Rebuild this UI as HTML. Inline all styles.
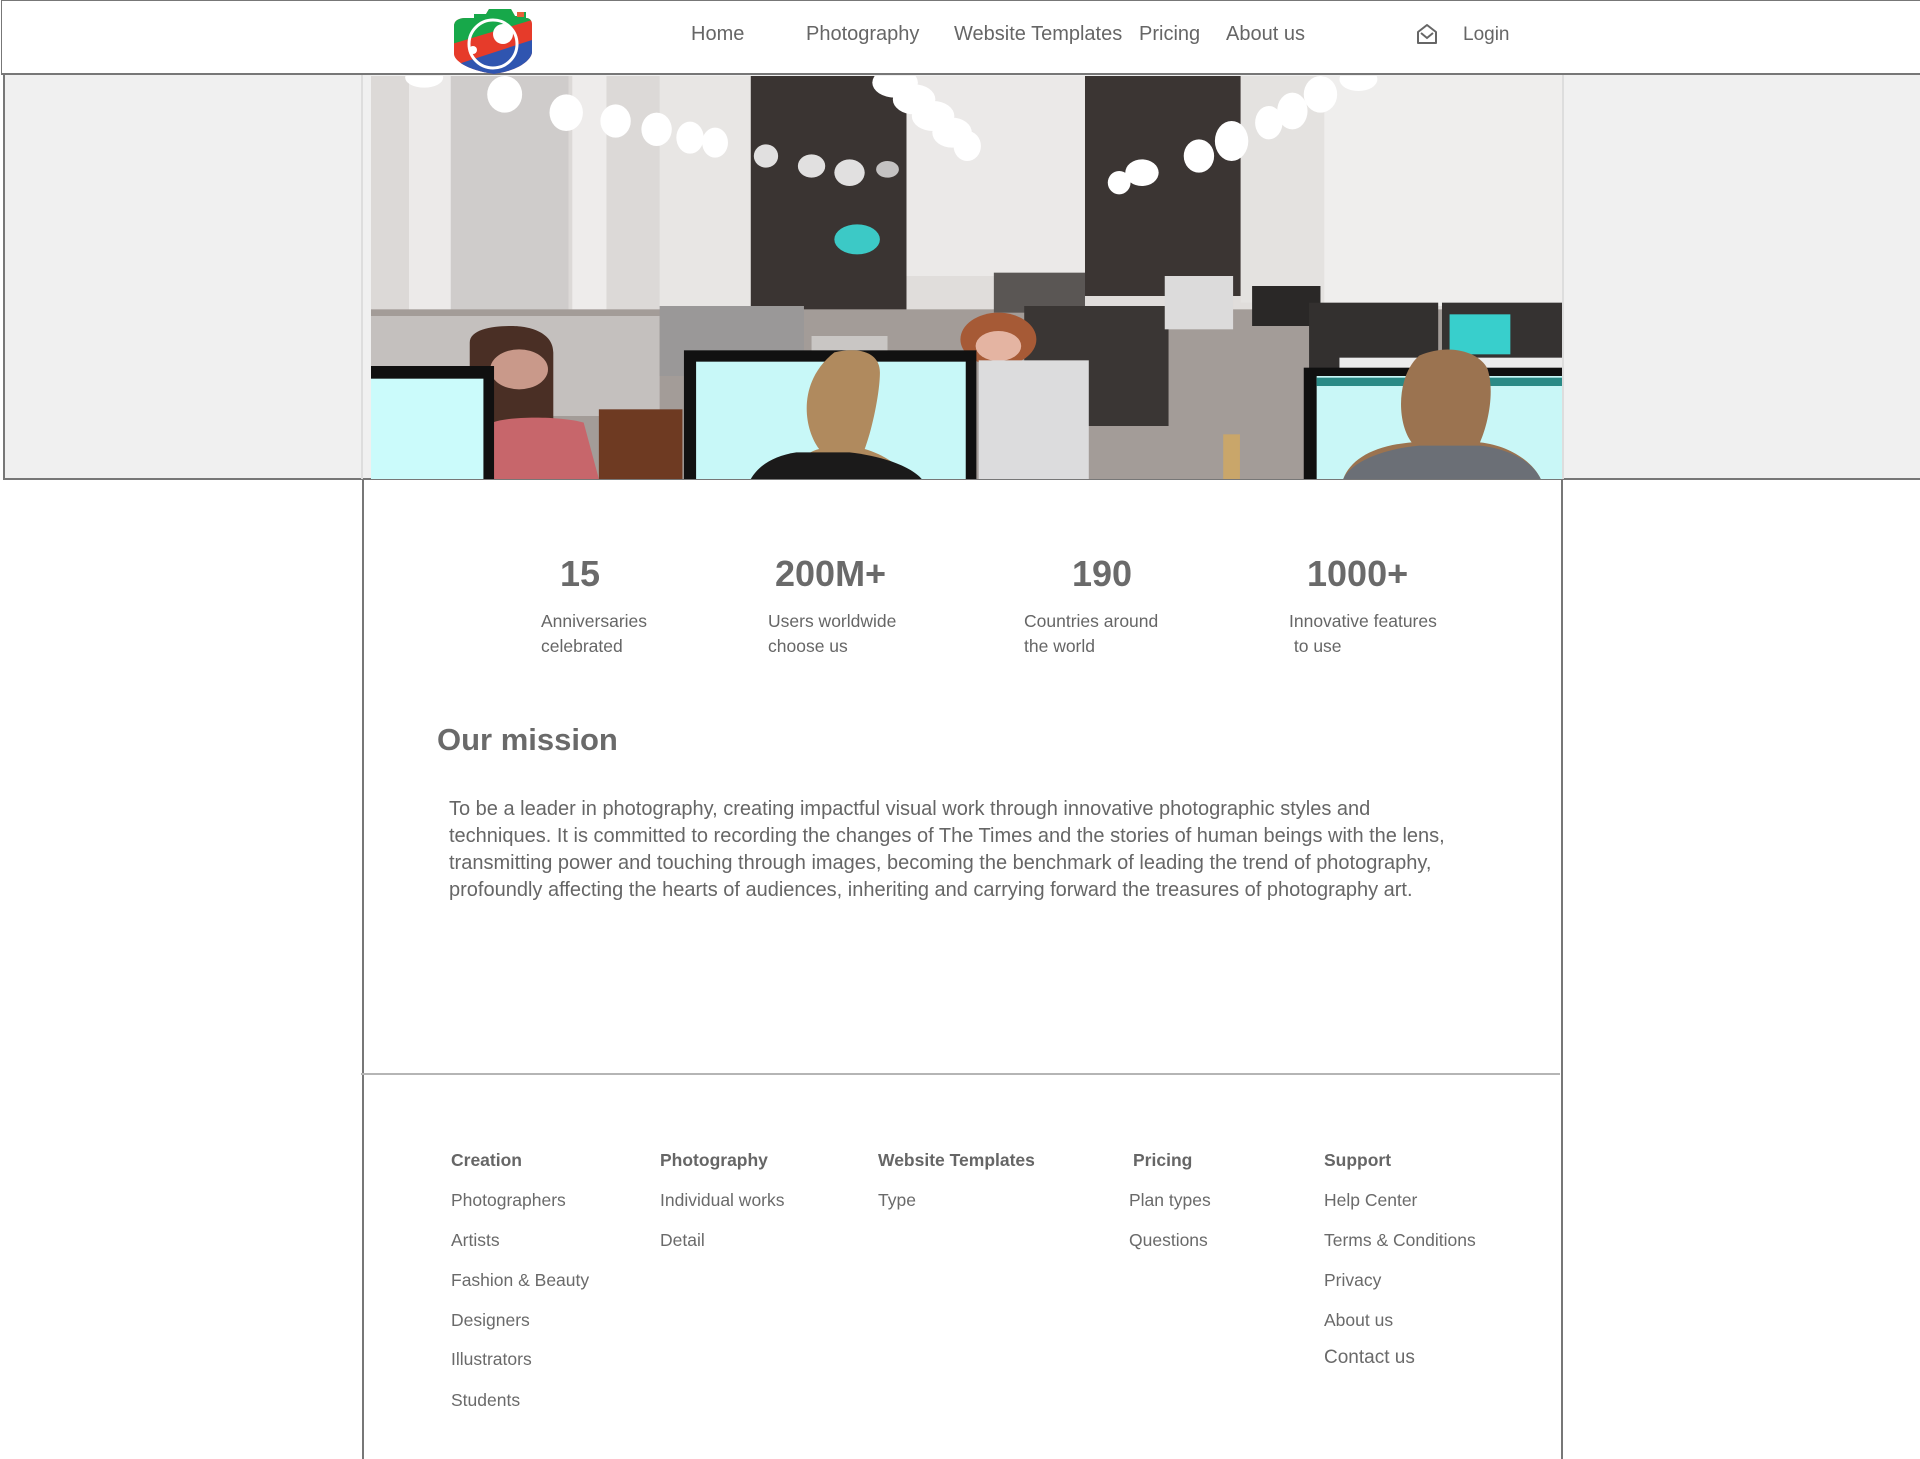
<!DOCTYPE html>
<html><head><meta charset="utf-8">
<style>
*{margin:0;padding:0;box-sizing:border-box}
html,body{width:1920px;height:1459px;overflow:hidden;background:#fff;font-family:"Liberation Sans",sans-serif;color:#666}
.a{position:absolute;white-space:nowrap}
.nav{font-size:20px;line-height:24px;top:22px;color:#666}
.num{font-size:36px;font-weight:bold;line-height:40px;top:554px;color:#6a6a6a}
.lab{font-size:17.5px;line-height:25px;top:609px;color:#666}
.fh{font-size:17.5px;font-weight:bold;line-height:22px;color:#666}
.fl{font-size:17.5px;line-height:22px;color:#6a6a6a}
</style></head><body>
<!-- header -->
<div class="a" style="left:1px;top:0;width:1919px;height:75px;border:1px solid #777;border-right:none;border-bottom:2px solid #777"></div>
<svg class="a" style="left:452px;top:6px" width="80" height="68" viewBox="0 0 80 68">
<defs><clipPath id="cb"><path d="M14 12h8v-4h12l3-5h22l4 7h5v-4h6v6c4 0 6 3 6 6v28c0 6-10 18-38 22C14 64 2 54 2 48V20c0-5 4-8 12-8z"/></clipPath></defs>
<g clip-path="url(#cb)">
<rect x="0" y="0" width="80" height="68" fill="#e63b2a"/>
<polygon points="0,0 80,0 80,14 0,38" fill="#17a84a"/>
<polygon points="0,60 80,34 80,68 0,68" fill="#2f55b0"/>
</g>
<rect x="65" y="6" width="7" height="5" fill="#e8603a"/>
<circle cx="41" cy="38" r="24" fill="none" stroke="#fff" stroke-width="3"/>
<circle cx="51" cy="28" r="10" fill="#fff"/>
<circle cx="21" cy="44" r="4" fill="#fff"/>
</svg>
<div class="a nav" style="left:691px">Home</div>
<div class="a nav" style="left:806px">Photography</div>
<div class="a nav" style="left:954px">Website Templates</div>
<div class="a nav" style="left:1139px">Pricing</div>
<div class="a nav" style="left:1226px">About us</div>
<svg class="a" style="left:1416px;top:23px" width="22" height="22" viewBox="0 0 22 22"><path d="M2 9 11 2l9 7v11H2z" fill="none" stroke="#666" stroke-width="2" stroke-linejoin="round"/><path d="M5 10l6 5 6-5" fill="none" stroke="#666" stroke-width="2"/></svg>
<div class="a nav" style="left:1463px;top:23px;font-size:19px">Login</div>

<!-- grey band -->
<div class="a" style="left:3px;top:75px;width:1917px;height:405px;background:#f0f0f0;border-left:2px solid #777;border-bottom:2px solid #777"></div>
<div class="a" style="left:362px;top:480px;width:2px;height:979px;background:#777"></div>
<div class="a" style="left:1561px;top:480px;width:2px;height:979px;background:#777"></div>
<div class="a" style="left:361px;top:75px;width:1203px;height:404px;border-left:2px solid #ddd;border-right:2px solid #ddd"></div>

<!-- hero -->
<svg class="a" style="left:371px;top:76px" width="1191" height="403" viewBox="0 0 1568 1209" preserveAspectRatio="none">
<rect width="1568" height="1209" fill="#e0dddb"/>
<rect x="0" y="0" width="500" height="800" fill="#dcd9d7"/>
<rect x="100" y="0" width="160" height="720" fill="#cfcccb"/>
<rect x="50" y="0" width="55" height="900" fill="#eceae9"/>
<rect x="265" y="0" width="45" height="1000" fill="#eeeceb"/>
<rect x="380" y="0" width="120" height="700" fill="#e8e6e4"/>
<rect x="500" y="0" width="205" height="710" fill="#3a3432"/>
<rect x="705" y="0" width="235" height="600" fill="#ebe9e8"/>
<rect x="940" y="0" width="205" height="660" fill="#3b3533"/>
<rect x="1145" y="0" width="110" height="680" fill="#e4e2e0"/>
<rect x="1255" y="0" width="313" height="690" fill="#efeeed"/>
<ellipse cx="640" cy="490" rx="30" ry="45" fill="#3cc9c6"/>
<rect x="0" y="700" width="1568" height="509" fill="#a39c98"/>
<rect x="0" y="720" width="380" height="300" fill="#c4c0be"/>
<rect x="380" y="690" width="190" height="210" fill="#9a9898"/>
<rect x="820" y="590" width="120" height="120" fill="#5a5654"/>
<rect x="860" y="690" width="190" height="360" fill="#3a3634"/>
<rect x="1045" y="600" width="90" height="160" fill="#dcdbdb"/>
<rect x="1160" y="630" width="90" height="120" fill="#2a2827"/>
<rect x="1235" y="680" width="170" height="200" fill="#33302f"/>
<rect x="1410" y="680" width="158" height="200" fill="#353231"/>
<rect x="1420" y="715" width="80" height="120" fill="#38cfcc"/>
<rect x="580" y="780" width="100" height="60" fill="#c9c6c4"/>
<path d="M130 1209V800c0-40 30-50 55-50s55 20 55 80v300l60 79z" fill="#4a2f25"/>
<path d="M160 1040c20-20 90-20 120 0l20 169H160z" fill="#c7666b"/>
<ellipse cx="195" cy="880" rx="38" ry="60" fill="#c9998a"/>
<rect x="300" y="1000" width="110" height="209" fill="#6e3a22"/>
<ellipse cx="826" cy="790" rx="50" ry="80" fill="#a65a36"/>
<ellipse cx="826" cy="810" rx="30" ry="45" fill="#e4b4a2"/>
<rect x="0" y="870" width="162" height="339" fill="#101010"/>
<rect x="0" y="908" width="148" height="301" fill="#cbfbfb"/>
<rect x="412" y="823" width="385" height="386" fill="#111"/>
<rect x="428" y="857" width="355" height="352" fill="#c8f8f8"/>
<rect x="800" y="853" width="145" height="356" fill="#dcdcdd"/>
<path d="M560 1209c0-40 10-80 30-90-20-60-30-200 20-290 40-20 60 10 60 60 0 60-10 170-20 230 30 20 50 60 60 90z" fill="#b08a5e"/>
<path d="M500 1209c10-40 30-70 60-80l70 0c40 10 80 40 95 80z" fill="#1b1a1a"/>
<rect x="1228" y="875" width="340" height="334" fill="#101010"/>
<rect x="1245" y="900" width="323" height="309" fill="#c9f7f7"/>
<rect x="1245" y="905" width="323" height="25" fill="#2a8a86"/>
<rect x="1275" y="845" width="293" height="30" fill="#ececec"/>
<path d="M1280 1209c10-60 40-100 90-110-20-60-20-200 10-260 40-40 80-10 90 40 10 70 0 170-10 220 40 10 70 60 80 110z" fill="#9b7350"/>
<path d="M1280 1209c10-50 50-90 100-100h80c40 10 70 50 80 100z" fill="#6b6f76"/>
<rect x="1122" y="1075" width="22" height="134" fill="#c9a66a"/>
<g fill="#fff">
<ellipse cx="70" cy="5" rx="25" ry="30"/><ellipse cx="176" cy="55" rx="23" ry="55"/><ellipse cx="257" cy="110" rx="22" ry="55"/><ellipse cx="322" cy="135" rx="20" ry="50"/><ellipse cx="376" cy="160" rx="20" ry="50"/><ellipse cx="420" cy="185" rx="18" ry="48"/><ellipse cx="453" cy="200" rx="17" ry="45"/>
<ellipse cx="690" cy="20" rx="30" ry="45"/><ellipse cx="715" cy="70" rx="28" ry="45"/><ellipse cx="740" cy="120" rx="28" ry="45"/><ellipse cx="765" cy="170" rx="26" ry="45"/><ellipse cx="785" cy="210" rx="18" ry="45"/>
<ellipse cx="1300" cy="10" rx="25" ry="35"/><ellipse cx="1250" cy="55" rx="22" ry="55"/><ellipse cx="1213" cy="105" rx="20" ry="55"/><ellipse cx="1182" cy="140" rx="18" ry="50"/><ellipse cx="1133" cy="195" rx="22" ry="60"/><ellipse cx="1090" cy="240" rx="20" ry="50"/><ellipse cx="1015" cy="290" rx="22" ry="40"/><ellipse cx="985" cy="320" rx="15" ry="35"/>
<ellipse cx="520" cy="240" rx="16" ry="35" opacity=".85"/><ellipse cx="580" cy="270" rx="18" ry="35" opacity=".85"/><ellipse cx="630" cy="290" rx="20" ry="40" opacity=".85"/><ellipse cx="680" cy="280" rx="15" ry="25" opacity=".7"/>
</g>
</svg>

<!-- stats -->
<div class="a num" style="left:560px">15</div>
<div class="a num" style="left:775px">200M+</div>
<div class="a num" style="left:1072px">190</div>
<div class="a num" style="left:1307px">1000+</div>
<div class="a lab" style="left:541px">Anniversaries<br>celebrated</div>
<div class="a lab" style="left:768px">Users worldwide<br>choose us</div>
<div class="a lab" style="left:1024px">Countries around<br>the world</div>
<div class="a lab" style="left:1289px">Innovative features<br>&nbsp;to use</div>

<!-- mission -->
<div class="a" style="left:437px;top:722px;font-size:31px;font-weight:bold;line-height:36px;color:#6a6a6a">Our mission</div>
<div class="a" style="left:449px;top:796px;font-size:20px;line-height:27px;color:#666">To be a leader in photography, creating impactful visual work through innovative photographic styles and<br>techniques. It is committed to recording the changes of The Times and the stories of human beings with the lens,<br>transmitting power and touching through images, becoming the benchmark of leading the trend of photography,<br>profoundly affecting the hearts of audiences, inheriting and carrying forward the treasures of photography art.</div>

<div class="a" style="left:361px;top:1073px;width:1199px;height:2px;background:#b5b5b5"></div>

<!-- footer -->
<div class="a fh" style="left:451px;top:1149px">Creation</div>
<div class="a fl" style="left:451px;top:1189px">Photographers</div>
<div class="a fl" style="left:451px;top:1229px">Artists</div>
<div class="a fl" style="left:451px;top:1269px">Fashion &amp; Beauty</div>
<div class="a fl" style="left:451px;top:1309px">Designers</div>
<div class="a fl" style="left:451px;top:1348px">Illustrators</div>
<div class="a fl" style="left:451px;top:1389px">Students</div>

<div class="a fh" style="left:660px;top:1149px">Photography</div>
<div class="a fl" style="left:660px;top:1189px">Individual works</div>
<div class="a fl" style="left:660px;top:1229px">Detail</div>

<div class="a fh" style="left:878px;top:1149px">Website Templates</div>
<div class="a fl" style="left:878px;top:1189px">Type</div>

<div class="a fh" style="left:1133px;top:1149px">Pricing</div>
<div class="a fl" style="left:1129px;top:1189px">Plan types</div>
<div class="a fl" style="left:1129px;top:1229px">Questions</div>

<div class="a fh" style="left:1324px;top:1149px">Support</div>
<div class="a fl" style="left:1324px;top:1189px">Help Center</div>
<div class="a fl" style="left:1324px;top:1229px">Terms &amp; Conditions</div>
<div class="a fl" style="left:1324px;top:1269px">Privacy</div>
<div class="a fl" style="left:1324px;top:1309px">About us</div>
<div class="a fl" style="left:1324px;top:1347px;font-size:19px">Contact us</div>
</body></html>
